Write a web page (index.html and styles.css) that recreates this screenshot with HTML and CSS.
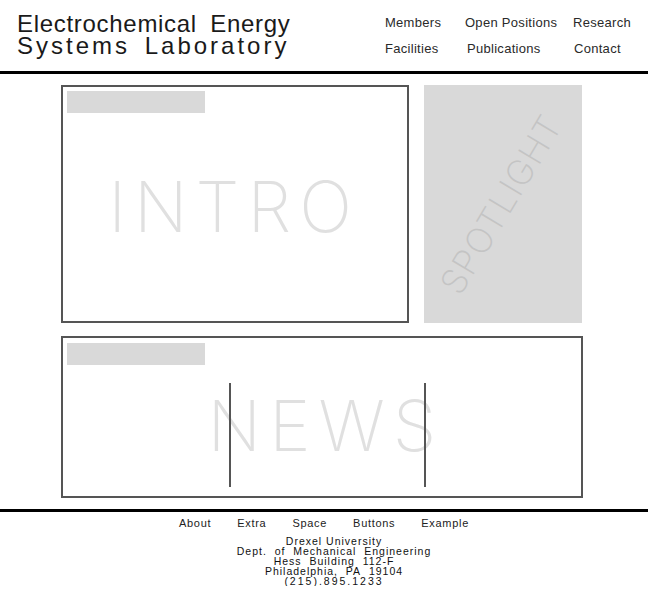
FILE: index.html
```html
<!DOCTYPE html>
<html lang="en">
<head>
<meta charset="utf-8">
<title>Electrochemical Energy Systems Laboratory</title>
<link rel="stylesheet" href="styles.css">
</head>
<body>
<header class="site-header">
  <h1 class="site-title">
    <span class="title-line title-line-1">Electrochemical Energy</span>
    <span class="title-line title-line-2">Systems Laboratory</span>
  </h1>
  <nav class="main-nav">
    <a href="#">Members</a>
    <a href="#">Open Positions</a>
    <a href="#">Research</a>
    <a href="#">Facilities</a>
    <a href="#" class="nav-pub">Publications</a>
    <a href="#" class="nav-contact">Contact</a>
  </nav>
</header>

<main class="content">
  <div class="top-row">
    <section class="panel intro">
      <div class="panel-label"></div>
      <div class="panel-word intro-word">INTRO</div>
    </section>
    <aside class="spotlight">
      <span class="spotlight-word">SPOTLIGHT</span>
    </aside>
  </div>
  <section class="panel news">
    <div class="panel-label news-label"></div>
    <div class="panel-word news-word">NEWS</div>
    <span class="divider divider-left"></span>
    <span class="divider divider-right"></span>
  </section>
</main>

<footer class="site-footer">
  <nav class="footer-nav">
    <a href="#">About</a>
    <a href="#">Extra</a>
    <a href="#">Space</a>
    <a href="#">Buttons</a>
    <a href="#">Example</a>
  </nav>
  <address class="address">
    <span>Drexel University</span>
    <span>Dept.&nbsp; of&nbsp; Mechanical&nbsp; Engineering</span>
    <span>Hess&nbsp; Building&nbsp; 112-F</span>
    <span>Philadelphia,&nbsp; PA&nbsp; 19104</span>
    <span class="phone">(215).895.1233</span>
  </address>
</footer>
</body>
</html>
```

FILE: styles.css
```css
* { box-sizing: border-box; }

html, body {
  margin: 0;
  padding: 0;
  background: #fff;
}

body {
  font-family: "Liberation Sans", Arial, sans-serif;
  color: #111;
}

a { color: inherit; text-decoration: none; }

/* Header */
.site-header {
  height: 74px;
  border-bottom: 3px solid #000;
  display: flex;
  justify-content: space-between;
  align-items: flex-start;
  padding: 0 17px;
}

.site-title {
  margin: 0;
  padding-top: 13px;
  font-weight: normal;
  font-size: 24px;
  line-height: 22px;
  color: #1a1a1a;
}

.title-line { display: block; white-space: nowrap; }
.title-line-1 { letter-spacing: 0.7px; word-spacing: 6px; }
.title-line-2 { letter-spacing: 3px; word-spacing: 5px; }

.main-nav {
  padding-top: 10px;
  display: grid;
  grid-template-columns: 80px 108px auto;
  font-size: 13px;
  line-height: 26px;
  letter-spacing: 0.3px;
  color: #2a2a2a;
}

.nav-pub { padding-left: 2px; }
.nav-contact { padding-left: 1px; }

/* Main content */
.content {
  width: 523px;
  margin-left: 61px;
  padding-top: 11px;
}

.top-row {
  display: flex;
  gap: 15px;
  align-items: flex-start;
}

.panel {
  position: relative;
  border: 2px solid #555;
  background: #fff;
}

.intro {
  width: 348px;
  height: 238px;
  padding: 4px;
}

.panel-label {
  width: 138px;
  height: 22px;
  background: #d9d9d9;
}

.panel-word {
  font-family: Inter, Roboto, "Liberation Sans", sans-serif;
  font-weight: 200;
  font-size: 70px;
  color: #e0e0e0;
  text-align: center;
  letter-spacing: 8px;
  line-height: 72px;
}

.intro-word {
  padding-right: 2px;
  margin-top: 58px;
}

.spotlight {
  width: 158px;
  height: 238px;
  background: #d9d9d9;
  display: flex;
  align-items: center;
  justify-content: center;
  overflow: hidden;
}

.spotlight-word {
  display: block;
  font-family: Inter, Roboto, "Liberation Sans", sans-serif;
  font-weight: 200;
  font-size: 35px;
  letter-spacing: 1px;
  color: #c4c4c4;
  transform: translate(-2px, 0) rotate(-59deg);
  white-space: nowrap;
}

.news {
  margin-top: 13px;
  width: 522px;
  height: 162px;
  padding: 5px 4px;
}

.news-word {
  padding-left: 8px;
  margin-top: 25px;
}

.divider {
  position: absolute;
  top: 45px;
  width: 2px;
  height: 104px;
  background: #555;
}
.divider-left { left: 166px; }
.divider-right { left: 361px; }

/* Footer */
.site-footer {
  margin-top: 11px;
  border-top: 3px solid #000;
  padding-top: 4px;
  text-align: center;
}

.footer-nav {
  display: flex;
  justify-content: center;
  gap: 26px;
  font-size: 11px;
  line-height: 14px;
  letter-spacing: 0.7px;
  color: #222;
}

.address {
  margin-top: 6px;
  padding-left: 20px;
  font-style: normal;
  font-size: 10.5px;
  line-height: 10px;
  letter-spacing: 1px;
  color: #111;
  display: flex;
  flex-direction: column;
  align-items: center;
}

.phone { letter-spacing: 2px; }
```
